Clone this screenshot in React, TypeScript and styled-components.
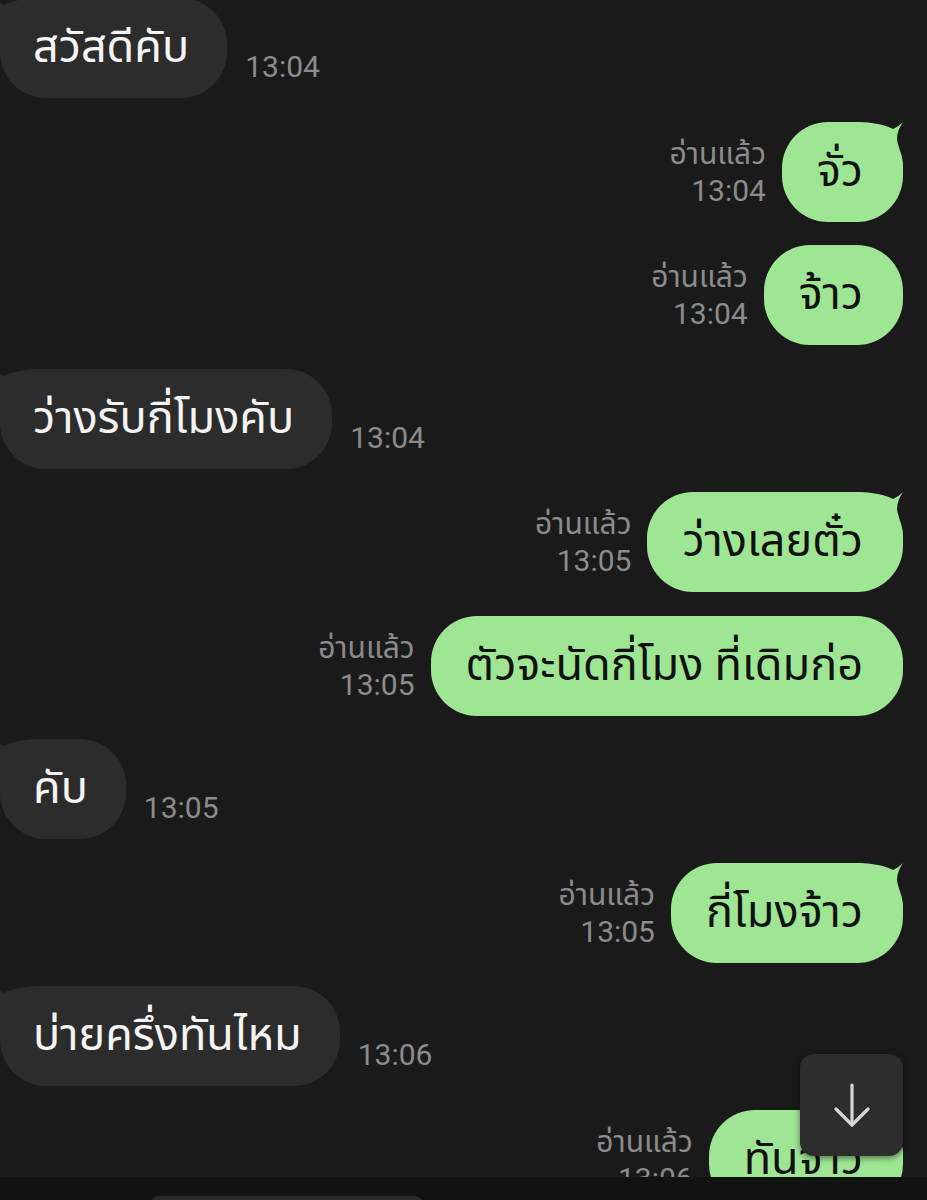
import React from 'react'
import styled, { createGlobalStyle } from 'styled-components'

const GlobalStyle = createGlobalStyle`
  html, body {
    margin: 0;
    padding: 0;
    background: #1a1a1a;
  }
  body {
    font-family: Roboto, "Noto Sans", "Noto Sans Thai", Loma, Garuda, sans-serif;
  }
`

type Message = {
  id: number
  text: string
  time: string
  mine: boolean
  tail?: boolean
}

const MESSAGES: Message[] = [
  { id: 1, text: 'สวัสดีคับ', time: '13:04', mine: false, tail: true },
  { id: 2, text: 'จั่ว', time: '13:04', mine: true, tail: true },
  { id: 3, text: 'จ้าว', time: '13:04', mine: true },
  { id: 4, text: 'ว่างรับกี่โมงคับ', time: '13:04', mine: false, tail: true },
  { id: 5, text: 'ว่างเลยตั๋ว', time: '13:05', mine: true, tail: true },
  { id: 6, text: 'ตัวจะนัดกี่โมง ที่เดิมก่อ', time: '13:05', mine: true },
  { id: 7, text: 'คับ', time: '13:05', mine: false, tail: true },
  { id: 8, text: 'กี่โมงจ้าว', time: '13:05', mine: true, tail: true },
  { id: 9, text: 'บ่ายครึ่งทันไหม', time: '13:06', mine: false, tail: true },
  { id: 10, text: 'ทันจ้าว', time: '13:06', mine: true, tail: true },
]

const GREEN = '#9fe694'
const GREY = '#2c2c2c'

const Screen = styled.div`
  position: relative;
  display: flex;
  flex-direction: column;
  height: 1200px;
  overflow: hidden;
  background: #1a1a1a;
`

const ChatArea = styled.div`
  position: relative;
  flex: 1;
  overflow: hidden;
`

const List = styled.div`
  display: flex;
  flex-direction: column;
  gap: 23.5px;
  margin-top: -2px;
  padding: 0 24px 0 0;
`

const Row = styled.div<{ $mine: boolean }>`
  display: flex;
  flex-direction: ${({ $mine }) => ($mine ? 'row-reverse' : 'row')};
  align-items: flex-end;
  gap: ${({ $mine }) => ($mine ? '16px' : '18px')};
`

const Bubble = styled.div<{ $mine: boolean }>`
  position: relative;
  display: flex;
  align-items: center;
  height: 100px;
  box-sizing: border-box;
  padding: ${({ $mine }) => ($mine ? '0 40px 0 35px' : '0 38px 0 33px')};
  border-radius: 46px;
  background: ${({ $mine }) => ($mine ? GREEN : GREY)};
  color: ${({ $mine }) => ($mine ? '#111' : '#f4f4f4')};
  font-size: 45px;
  white-space: nowrap;
`

const Tail = styled.svg<{ $mine: boolean }>`
  position: absolute;
  top: 0;
  ${({ $mine }) => ($mine ? 'right: 0;' : 'left: -6px; transform: scaleX(-1);')}
  width: 46px;
  height: 46px;
`

const Meta = styled.div`
  display: flex;
  flex-direction: column;
  align-items: flex-end;
  padding-bottom: 13px;
  color: #8b8b8b;
  font-size: 30px;
  line-height: 37px;
`

const ScrollButton = styled.div`
  position: absolute;
  right: 24px;
  bottom: 21px;
  width: 103px;
  height: 102px;
  border-radius: 14px;
  background: #2d2d2d;
  box-shadow: 0 2px 6px rgba(0, 0, 0, 0.5);
  display: flex;
  align-items: center;
  justify-content: center;
`

const BottomBar = styled.div`
  height: 23px;
  background: #121212;
  padding: 19px 0 0 147px;
  box-sizing: border-box;
`

const InputField = styled.div`
  width: 280px;
  height: 40px;
  border-radius: 14px;
  background: #2a2a2a;
`

const TailShape = ({ mine }: { mine: boolean }) => (
  <Tail $mine={mine} viewBox='0 0 46 46'>
    <path
      d='M0 0 C15 0 29 3 36 7 C40 5 43 3 46 0 C42 6 40 11 40 17 C41 26 46 32 46 46 L0 46 Z'
      fill={mine ? GREEN : GREY}
    />
  </Tail>
)

function App() {
  return (
    <>
      <GlobalStyle />
      <Screen>
        <ChatArea>
          <List>
            {MESSAGES.map((m) => (
              <Row key={m.id} $mine={m.mine}>
                <Bubble $mine={m.mine}>
                  {m.tail ? <TailShape mine={m.mine} /> : null}
                  <span style={{ position: 'relative' }}>{m.text}</span>
                </Bubble>
                <Meta>
                  {m.mine ? <span>อ่านแล้ว</span> : null}
                  <span>{m.time}</span>
                </Meta>
              </Row>
            ))}
          </List>
          <ScrollButton>
            <svg width='40' height='48' viewBox='0 0 40 48' fill='none' stroke='#d6d6d6' strokeWidth='3.2' strokeLinecap='round' strokeLinejoin='round'>
              <path d='M20 4 V44' />
              <path d='M4 28 L20 44 L36 28' />
            </svg>
          </ScrollButton>
        </ChatArea>
        <BottomBar>
          <InputField />
        </BottomBar>
      </Screen>
    </>
  )
}

export default App
